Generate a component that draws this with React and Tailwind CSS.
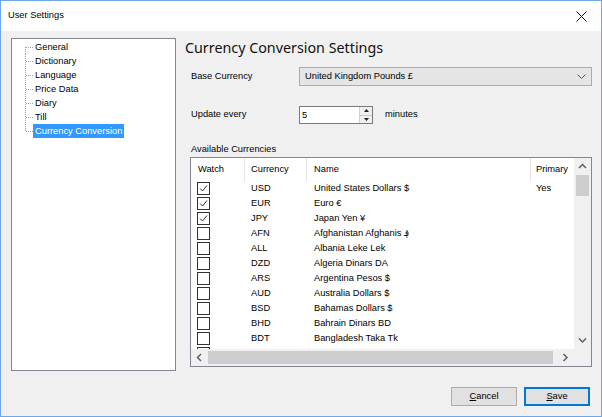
import React from 'react';

const treeItems = ['General', 'Dictionary', 'Language', 'Price Data', 'Diary', 'Till', 'Currency Conversion'];

const rows = [
  { w: true, c: 'USD', n: 'United States Dollars $', p: 'Yes' },
  { w: true, c: 'EUR', n: 'Euro €' },
  { w: true, c: 'JPY', n: 'Japan Yen ¥' },
  { w: false, c: 'AFN', n: 'Afghanistan Afghanis ؋' },
  { w: false, c: 'ALL', n: 'Albania Leke Lek' },
  { w: false, c: 'DZD', n: 'Algeria Dinars DA' },
  { w: false, c: 'ARS', n: 'Argentina Pesos $' },
  { w: false, c: 'AUD', n: 'Australia Dollars $' },
  { w: false, c: 'BSD', n: 'Bahamas Dollars $' },
  { w: false, c: 'BHD', n: 'Bahrain Dinars BD' },
  { w: false, c: 'BDT', n: 'Bangladesh Taka Tk' },
  // partially scrolled row, only its checkbox top shows
  { w: false, c: '', n: '' },
];

function TreeLine({ first, last }) {
  return (
    <svg width="8" height="14" className="shrink-0">
      <line x1="0.5" y1={first ? 7 : 0} x2="0.5" y2={last ? 7 : 14} stroke="#a0a0a0" strokeDasharray="1 1" />
      <line x1="1" y1="7.5" x2="8" y2="7.5" stroke="#a0a0a0" strokeDasharray="1 1" />
    </svg>
  );
}

function CheckBox({ checked }) {
  return (
    <div className="w-[13px] h-[13px] border border-[#333] bg-white flex items-center justify-center">
      {checked && (
        <svg width="9" height="9" viewBox="0 0 9 9">
          <path d="M1 4.5 L3.5 7 L8 1.5" fill="none" stroke="#333" strokeWidth="1" />
        </svg>
      )}
    </div>
  );
}

function Arrow({ dir }) {
  const d = {
    up: 'M1 5 L4.5 1.5 L8 5',
    down: 'M1 1.5 L4.5 5 L8 1.5',
    left: 'M5 1 L1.5 4.5 L5 8',
    right: 'M1.5 1 L5 4.5 L1.5 8',
  }[dir];
  const vertical = dir === 'up' || dir === 'down';
  return (
    <svg width={vertical ? 9 : 7} height={vertical ? 7 : 9}>
      <path d={d} fill="none" stroke="#606060" strokeWidth="1.5" />
    </svg>
  );
}

export default function App() {
  return (
    <div className="w-[602px] h-[417px] border border-[#6fa8e6] flex flex-col bg-[#f0f0f0] text-black font-['Liberation_Sans',Arial,sans-serif] text-[9.3px] overflow-hidden">
      {/* title bar */}
      <div className="h-[30px] bg-white flex items-center justify-between pl-[7px] pr-[10px] shrink-0">
        <span className="text-[9.3px] text-black">User Settings</span>
        <svg width="11" height="11" viewBox="0 0 11 11" className="mr-[4px]">
          <path d="M0.5 0.5 L10.5 10.5 M10.5 0.5 L0.5 10.5" stroke="#111" strokeWidth="1" />
        </svg>
      </div>

      {/* body */}
      <div className="flex-1 flex flex-col">
        <div className="flex pt-[7px] pl-[10px]">
          {/* tree */}
          <div className="w-[165px] h-[333px] border border-[#828790] bg-white pt-[1px] shrink-0">
            {treeItems.map((t, i) => (
              <div key={t} className="flex items-center h-[14px]">
                <div className="w-[13px] shrink-0" />
                <TreeLine first={i === 0} last={i === treeItems.length - 1} />
                <span
                  className={
                    i === treeItems.length - 1
                      ? 'px-[2px] h-[14px] leading-[14px] bg-[#3399ff] text-white'
                      : 'px-[2px] h-[14px] leading-[14px]'
                  }
                >
                  {t}
                </span>
              </div>
            ))}
          </div>

          {/* right panel */}
          <div className="ml-[9px] w-[407px] flex flex-col">
            <div className="font-['Noto_Sans',sans-serif] text-[14.3px] leading-[20px] text-[#111]">
              Currency Conversion Settings
            </div>

            <div className="flex items-center mt-[9px] h-[19px]">
              <div className="ml-[6px] w-[108px]">Base Currency</div>
              <div className="w-[293px] h-[19px] border border-[#adadad] bg-[#e5e5e5] flex items-center justify-between pl-[5px] pr-[5px]">
                <span>United Kingdom Pounds £</span>
                <svg width="9" height="6" viewBox="0 0 9 6">
                  <path d="M0.5 0.5 L4.5 4.5 L8.5 0.5" fill="none" stroke="#555" strokeWidth="1" />
                </svg>
              </div>
            </div>

            <div className="flex items-center mt-[20px] h-[18px]">
              <div className="ml-[6px] w-[108px]">Update every</div>
              <div className="w-[74px] h-[18px] border border-[#7a7a7a] bg-white flex">
                <div className="flex-1 pl-[2px] leading-[16px]">5</div>
                <div className="w-[13px] flex flex-col border-l border-[#d0d0d0] bg-[#f0f0f0]">
                  <div className="flex-1 flex items-center justify-center border-b border-[#c8c8c8]">
                    <svg width="5" height="3"><path d="M0 3 L2.5 0 L5 3 Z" fill="#222" /></svg>
                  </div>
                  <div className="flex-1 flex items-center justify-center">
                    <svg width="5" height="3"><path d="M0 0 L2.5 3 L5 0 Z" fill="#222" /></svg>
                  </div>
                </div>
              </div>
              <div className="ml-[12px]">minutes</div>
            </div>

            <div className="ml-[6px] mt-[19px] leading-[13px]">Available Currencies</div>

            {/* list view */}
            <div className="ml-[5px] mt-[1px] w-[402px] h-[210px] border border-[#828790] bg-white flex flex-col">
              <div className="flex flex-1 min-h-0">
                <div className="flex-1 flex flex-col min-w-0">
                  <div className="h-[23px] flex items-center shrink-0">
                    <div className="w-[54px] h-full pl-[7px] flex items-center border-r border-[#e5e5e5]">Watch</div>
                    <div className="w-[62px] h-full pl-[6px] flex items-center border-r border-[#e5e5e5]">Currency</div>
                    <div className="w-[224px] h-full pl-[7px] flex items-center border-r border-[#e5e5e5]">Name</div>
                    <div className="flex-1 h-full pl-[5px] flex items-center">Primary</div>
                  </div>
                  <div className="flex-1 overflow-hidden">
                    {rows.map((r, i) => (
                      <div key={i} className="h-[15px] flex items-center">
                        <div className="w-[54px] pl-[6px]">
                          <CheckBox checked={r.w} />
                        </div>
                        <div className="w-[62px] pl-[6px]">{r.c}</div>
                        <div className="w-[224px] pl-[7px] font-['Liberation_Sans','DejaVu_Sans',sans-serif]">{r.n}</div>
                        <div className="flex-1 pl-[5px]">{r.p || ''}</div>
                      </div>
                    ))}
                  </div>
                </div>
                {/* vertical scrollbar */}
                <div className="w-[17px] bg-[#f0f0f0] flex flex-col shrink-0">
                  <div className="h-[17px] flex items-center justify-center"><Arrow dir="up" /></div>
                  <div className="flex-1 px-[2px]">
                    <div className="h-[21px] bg-[#cdcdcd]" />
                  </div>
                  <div className="h-[17px] flex items-center justify-center"><Arrow dir="down" /></div>
                </div>
              </div>
              {/* horizontal scrollbar */}
              <div className="h-[17px] flex shrink-0 bg-[#f0f0f0]">
                <div className="w-[17px] flex items-center justify-center"><Arrow dir="left" /></div>
                <div className="flex-1 py-[2px] pr-[4px]">
                  <div className="h-full bg-[#cdcdcd]" />
                </div>
                <div className="w-[17px] flex items-center justify-center"><Arrow dir="right" /></div>
                <div className="w-[17px] bg-[#f0f0f0]" />
              </div>
            </div>
          </div>
        </div>

        {/* buttons */}
        <div className="flex justify-end gap-[7px] pr-[11px] mt-[16px]">
          <button className="w-[66px] h-[19px] border border-[#adadad] bg-[#e1e1e1] text-[9.3px] leading-none">
            <span className="underline">C</span>ancel
          </button>
          <button className="w-[66px] h-[19px] border-2 border-[#0078d7] bg-[#e1e1e1] text-[9.3px] leading-none">
            <span className="underline">S</span>ave
          </button>
        </div>
      </div>
    </div>
  );
}
